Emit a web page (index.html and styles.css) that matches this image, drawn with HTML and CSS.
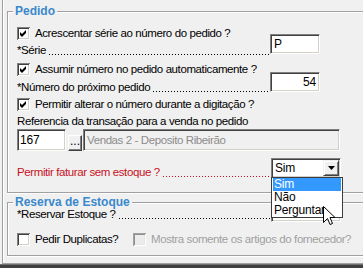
FILE: index.html
```html
<!DOCTYPE html>
<html>
<head>
<meta charset="utf-8">
<link rel="stylesheet" href="styles.css">
</head>
<body>
<svg class="defs" width="0" height="0">
  <symbol id="cb-on" viewBox="0 0 13 13">
    <rect width="13" height="13" fill="#fff"/>
    <path d="M0 0H13V1H1V13H0Z" fill="#808080"/>
    <path d="M1 1H12V2H2V12H1Z" fill="#404040"/>
    <path d="M12 1H13V13H1V12H12Z" fill="#fff"/>
    <path d="M11 2H12V12H2V11H11Z" fill="#d4d0c8"/>
    <path d="M3 5L5 7L9 3V6L5 10L3 8Z" fill="#000"/>
  </symbol>
  <symbol id="cb-off" viewBox="0 0 13 13">
    <rect width="13" height="13" fill="#fff"/>
    <path d="M0 0H13V1H1V13H0Z" fill="#808080"/>
    <path d="M1 1H12V2H2V12H1Z" fill="#404040"/>
    <path d="M12 1H13V13H1V12H12Z" fill="#fff"/>
    <path d="M11 2H12V12H2V11H11Z" fill="#d4d0c8"/>
  </symbol>
  <symbol id="cb-dis" viewBox="0 0 13 13">
    <rect width="13" height="13" fill="#ececec"/>
    <path d="M0 0H13V1H1V13H0Z" fill="#a0a0a0"/>
    <path d="M1 1H12V2H2V12H1Z" fill="#909090"/>
    <path d="M12 1H13V13H1V12H12Z" fill="#fff"/>
    <path d="M11 2H12V12H2V11H11Z" fill="#e4e4e4"/>
  </symbol>
</svg>

<div class="panel">
  <fieldset class="group">
    <legend>Pedido</legend>

    <div class="row-cb">
      <svg class="cb"><use href="#cb-on"/></svg>
      <span>Acrescentar série ao número do pedido ?</span>
    </div>

    <div class="row-field r-serie">
      <div class="lead"><span>*Série</span><span class="dots"></span></div>
      <div class="input">P</div>
    </div>

    <div class="row-cb mt3">
      <svg class="cb"><use href="#cb-on"/></svg>
      <span>Assumir número no pedido automaticamente ?</span>
    </div>

    <div class="row-field r-num">
      <div class="lead"><span>*Número do próximo pedido</span><span class="dots"></span></div>
      <div class="input num">54</div>
    </div>

    <div class="row-cb mt1">
      <svg class="cb"><use href="#cb-on"/></svg>
      <span>Permitir alterar o número durante a digitação ?</span>
    </div>

    <div class="row-text">Referencia da transação para a venda no pedido</div>

    <div class="row-ref">
      <div class="input code">167</div>
      <div class="btn">...</div>
      <div class="input disabled">Vendas 2 - Deposito Ribeirão</div>
    </div>

    <div class="row-field r-fat">
      <div class="lead red"><span>Permitir faturar sem estoque ?</span><span class="dots"></span></div>
      <div class="select">
        <span class="sel-text">Sim</span>
        <span class="arrow"><svg width="7" height="4" viewBox="0 0 7 4"><path d="M0 0H7L3.5 4Z" fill="#000"/></svg></span>
        <div class="dropdown">
          <div class="opt active">Sim</div>
          <div class="opt">Não</div>
          <div class="opt">Perguntar</div>
          <svg class="cursor" width="13" height="20" viewBox="0 0 13 20"><path d="M0.5 0.5V16.5L4.5 12.5L7 18.5L9.5 17.5L7 11.5H12Z" fill="#fff" stroke="#000" stroke-width="1" stroke-linejoin="miter"/></svg>
        </div>
      </div>
    </div>
  </fieldset>

  <fieldset class="group reserva">
    <legend>Reserva de Estoque</legend>

    <div class="row-field r-res">
      <div class="lead"><span>*Reservar Estoque ?</span><span class="dots"></span></div>
      <div class="select">
        <span class="sel-text"></span>
      </div>
    </div>

    <div class="row-cb r-dup">
      <div class="cb-item first">
        <svg class="cb"><use href="#cb-off"/></svg>
        <span>Pedir Duplicatas?</span>
      </div>
      <div class="cb-item dis">
        <svg class="cb"><use href="#cb-dis"/></svg>
        <span>Mostra somente os artigos do fornecedor?</span>
      </div>
    </div>
  </fieldset>
</div>
<div class="bottom"></div>
</body>
</html>
```

FILE: styles.css
```css
* { box-sizing: border-box; }
html, body { margin: 0; padding: 0; }
body {
  width: 363px;
  height: 268px;
  overflow: hidden;
  background: #f0f0f0;
  color: #000;
  font-family: "Liberation Sans", Arial, sans-serif;
  font-size: 11.5px;
  letter-spacing: -0.4px;
  line-height: 15px;
}
.defs { position: absolute; width: 0; height: 0; }

.panel {
  margin-left: 2px;
  width: 361px;
  height: 264px;
  overflow: hidden;
  border-left: 1px solid #a0a0a0;
  border-bottom: 1px solid #a0a0a0;
  box-shadow: inset 1px 0 0 #fff;
  padding: 4px 0 0 4px;
}
.bottom { height: 4px; background: #404040; border-top: 1px solid #707070; }

.group {
  margin: 0;
  width: 357px;
  min-width: 0;
  border: 1px solid #a0a0a0;
  border-right-color: transparent;
  box-shadow: inset 1px 1px 0 #fff, 0 1px 0 #fff;
  padding: 7px 0 12px 9px;
}
.group legend {
  font-weight: bold;
  font-size: 12px;
  letter-spacing: 0;
  line-height: 14px;
  color: #3a88cc;
  background: #f0f0f0;
  padding: 0 2px;
  margin-left: -4px;
}
.reserva { margin-top: 2px; padding: 0 0 8px 9px; }

.row-cb {
  display: flex;
  align-items: center;
  gap: 5px;
  height: 16px;
  white-space: nowrap;
}
.cb { width: 13px; height: 13px; flex: none; }
.mt3 { margin-top: 3px; }
.mt1 { margin-top: 1px; }

.row-field { display: flex; align-items: flex-end; }
.lead {
  width: 253px;
  flex: none;
  display: flex;
  white-space: nowrap;
}
.dots {
  flex: 1;
  margin-left: 3px;
  height: 15px;
  background-image: linear-gradient(to right, currentColor 1px, transparent 1px);
  background-size: 3px 1px;
  background-repeat: repeat-x;
  background-position: 0 11px;
}
.red { color: #c8101e; }

.r-serie { margin-top: -7px; height: 24px; }
.r-num { margin-top: -5px; height: 23px; }
.r-fat { margin-top: 7px; height: 22px; }
.r-res { margin-top: -7px; height: 20px; }
.r-dup { margin-top: 9px; gap: 0; }

.input {
  align-self: flex-start;
  width: 50px;
  height: 20px;
  background: #fff;
  border-style: solid;
  border-width: 1px;
  border-color: #808080 #fff #fff #808080;
  box-shadow: inset 1px 1px 0 #404040, inset -1px -1px 0 #d4d0c8;
  padding: 2px 3px 0 3px;
  font-size: 12px;
  letter-spacing: -0.2px;
  line-height: 15px;
  white-space: nowrap;
  overflow: hidden;
}
.input.num { text-align: right; }

.row-text { margin-top: 2px; height: 15px; white-space: nowrap; }

.row-ref { display: flex; align-items: flex-end; height: 22px; }
.input.code { width: 49px; height: 22px; padding: 3px 2px 0 2px; }
.btn {
  width: 14px;
  height: 16px;
  margin-left: 2px;
  border-style: solid;
  border-width: 1px;
  border-color: #fff #404040 #404040 #fff;
  box-shadow: inset -1px -1px 0 #808080;
  background: #f0f0f0;
  font-size: 12px;
  letter-spacing: 0;
  line-height: 10px;
  text-align: center;
  overflow: hidden;
}
.input.disabled {
  width: 257px;
  height: 22px;
  margin-left: 1px;
  background: #f0f0f0;
  color: #8c8c8c;
  font-size: 11.5px;
  letter-spacing: -0.4px;
  padding: 3px 2px 0 3px;
}

.select {
  position: relative;
  align-self: flex-start;
  width: 70px;
  height: 20px;
  margin-left: 1px;
  display: flex;
  background: #fff;
  border-style: solid;
  border-width: 1px;
  border-color: #808080 #fff #fff #808080;
  box-shadow: inset 1px 1px 0 #404040, inset -1px -1px 0 #d4d0c8;
  padding: 1px;
  font-size: 12px;
  letter-spacing: -0.2px;
}
.sel-text { flex: 1; padding: 1px 0 0 2px; line-height: 15px; }
.arrow {
  width: 16px;
  height: 16px;
  display: flex;
  align-items: center;
  justify-content: center;
  background: #f0f0f0;
  border-style: solid;
  border-width: 1px;
  border-color: #f0f0f0 #404040 #404040 #f0f0f0;
  box-shadow: inset 1px 1px 0 #fff, inset -1px -1px 0 #808080;
}
.dropdown {
  position: absolute;
  z-index: 2;
  left: -1px;
  top: 18px;
  width: 72px;
  height: 41px;
  background: #fff;
  border: 1px solid #3c3c3c;
}
.opt { height: 13px; line-height: 13px; padding-left: 2px; white-space: nowrap; }
.opt.active { background: #3399ff; color: #fff; margin: 0 1px; padding-left: 1px; }
.cursor { position: absolute; left: 51px; top: 28px; }

.cb-item { display: flex; align-items: center; gap: 5px; white-space: nowrap; }
.cb-item.first { width: 116px; }
.cb-item.dis { color: #a0a0a0; }
```
